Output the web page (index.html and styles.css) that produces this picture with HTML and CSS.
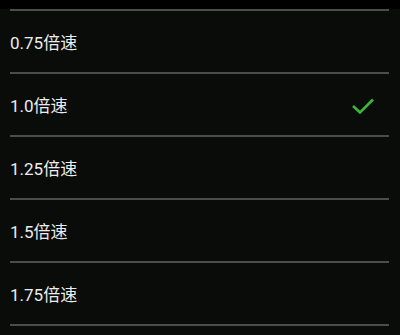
FILE: index.html
```html
<!DOCTYPE html>
<html lang="zh">

<head>
    <meta charset="UTF-8">
    <meta name="viewport" content="width=device-width, initial-scale=1.0">
    <title>倍速</title>
    <link rel="stylesheet" href="styles.css">
</head>

<body>

    <div class="top-strip"></div>

    <ul class="speed-list">
        <li class="speed-item">0.75倍速</li>
        <li class="speed-item is-selected">
            1.0倍速
            <svg class="check-icon" width="24" height="18" viewBox="0 0 24 18">
                <path d="M2 9 L9 15.5 L22 2.5" fill="none" stroke="#3cb53c" stroke-width="2.6" stroke-linejoin="miter" />
            </svg>
        </li>
        <li class="speed-item">1.25倍速</li>
        <li class="speed-item">1.5倍速</li>
        <li class="speed-item">1.75倍速</li>
    </ul>

</body>

</html>
```

FILE: styles.css
```css
/* --- Page --- */
body {
    margin: 0;
    background-color: #0a0c0a;
    font-family: Roboto, "Noto Sans CJK SC", sans-serif;
    color: #ececec;
    height: 335px;
    overflow: hidden;
}

.top-strip {
    height: 9px;
    background-color: #000;
}

/* --- List --- */
.speed-list {
    list-style: none;
    margin: 0;
    padding: 0 11px 0 10px;
}

.speed-item {
    display: flex;
    align-items: center;
    justify-content: space-between;
    height: 61px;
    border-top: 2px solid #4a4d4a;
    font-size: 17px;
}

.speed-item:last-child {
    border-bottom: 2px solid #4a4d4a;
}

.check-icon {
    margin-right: 14px;
    margin-top: 2px;
}
```
